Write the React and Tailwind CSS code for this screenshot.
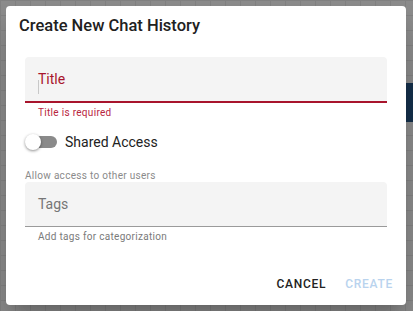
import React from "react";

function Switch() {
  return (
    <div className="relative w-[32px] h-[16px] flex items-center">
      <div className="ml-[2px] w-[30px] h-[12px] rounded-full bg-[#8a8a8a]" />
      <div className="absolute left-0 top-0 w-[16px] h-[16px] rounded-full bg-white shadow-[0_1px_3px_rgba(0,0,0,0.45)]" />
    </div>
  );
}

export default function App() {
  return (
    <div className="relative w-[413px] h-[311px] overflow-hidden bg-[#8c8c8c] bg-[linear-gradient(to_right,#828282_1px,transparent_1px),linear-gradient(to_bottom,#828282_1px,transparent_1px)] bg-[size:15px_15px] font-['Roboto',sans-serif] pt-[6px] pl-[6px]">
      {/* page behind the backdrop */}
      <div className="absolute left-[406px] top-[83px] w-[7px] h-[39px] bg-[#15304b]" />

      <div className="relative w-[400px] h-[299px] bg-white rounded-[4px] shadow-[0_11px_15px_-7px_rgba(0,0,0,0.2),0_24px_38px_3px_rgba(0,0,0,0.14)] flex flex-col">
        <div className="h-[51px] pl-[13px] pt-[8px] text-[16.5px] leading-[24px] font-medium text-[#212121]">
          Create New Chat History
        </div>

        <div className="relative mx-[19px] h-[46px] bg-[#f4f4f4] rounded-t-[4px] border-b-2 border-[#a8142c] pl-[13px] pt-[14px]">
          <div className="text-[14px] leading-[16px] text-[#a8142c]">Title</div>
          <div className="absolute left-[13px] top-[23px] w-px h-[14px] bg-[#c8c8c8]" />
        </div>
        <div className="mt-[4px] pl-[32px] text-[10px] leading-[12px] tracking-[0.03em] text-[#b8243e]">
          Title is required
        </div>

        <div className="mt-[13px] ml-[19px] h-[20px] flex items-center gap-[8px]">
          <Switch />
          <span className="text-[14px] leading-[16px] text-[#222]">Shared Access</span>
        </div>

        <div className="mt-[18px] pl-[19px] text-[10px] leading-[12px] tracking-[0.03em] text-[#8a8a8a]">
          Allow access to other users
        </div>

        <div className="mx-[19px] h-[45px] bg-[#f4f4f4] rounded-t-[4px] border-b border-[#9a9a9a] pl-[13px] pt-[14px]">
          <div className="text-[14px] leading-[16px] text-[#767676]">Tags</div>
        </div>
        <div className="mt-[4px] pl-[32px] text-[10px] leading-[12px] tracking-[0.03em] text-[#7a7a7a]">
          Add tags for categorization
        </div>

        <div className="mt-auto pb-[13px] pr-[13px] flex justify-end gap-[19px] text-[12px] leading-[16px] font-medium tracking-[0.06em]">
          <button className="text-[#222]">CANCEL</button>
          <button className="text-[#b9d3ee]" disabled>CREATE</button>
        </div>
      </div>
    </div>
  );
}
